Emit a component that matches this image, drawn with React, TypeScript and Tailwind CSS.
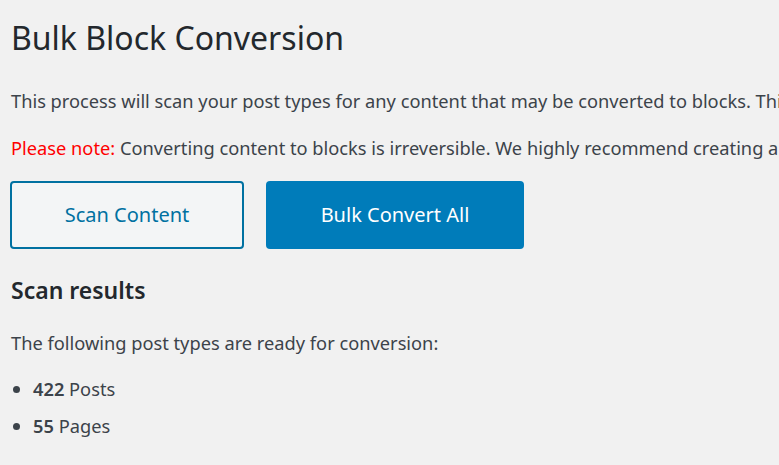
export default function App() {
  return (
    <div
      className="w-[779px] h-[465px] overflow-hidden bg-[#f1f1f1] text-[#3c434a] pl-[11px]"
      style={{ fontFamily: '"Noto Sans", "Open Sans", sans-serif' }}
    >
      <h1 className="text-[32px] leading-[44px] pt-[16px] text-[#23282d] font-normal whitespace-nowrap">
        Bulk Block Conversion
      </h1>
      <p className="mt-[26px] text-[18.25px] leading-[30px] whitespace-nowrap">
        This process will scan your post types for any content that may be converted to blocks. This process may take a while.
      </p>
      <p className="mt-[17px] text-[18.25px] leading-[30px] whitespace-nowrap">
        <span className="text-[#ff0000]">Please note:</span> Converting content to blocks is irreversible. We highly recommend creating a backup before proceeding.
      </p>
      <div className="mt-[18px] ml-[-1px] flex gap-[22px]">
        <button className="w-[234px] h-[68px] rounded-[4px] border-2 border-[#0071a1] bg-[#f3f5f6] text-[#0071a1] text-[20px]">
          Scan Content
        </button>
        <button className="w-[258px] h-[68px] rounded-[4px] bg-[#007cba] text-white text-[20px]">
          Bulk Convert All
        </button>
      </div>
      <h2 className="mt-[24px] text-[23px] leading-[34px] font-semibold text-[#23282d]">Scan results</h2>
      <p className="mt-[21px] text-[18.25px] leading-[30px]">The following post types are ready for conversion:</p>
      <ul className="mt-[16px] list-disc pl-[22px] text-[18.25px] leading-[30px]">
        <li className="mb-[7px]"><strong className="font-semibold">422</strong> Posts</li>
        <li><strong className="font-semibold">55</strong> Pages</li>
      </ul>
    </div>
  );
}
